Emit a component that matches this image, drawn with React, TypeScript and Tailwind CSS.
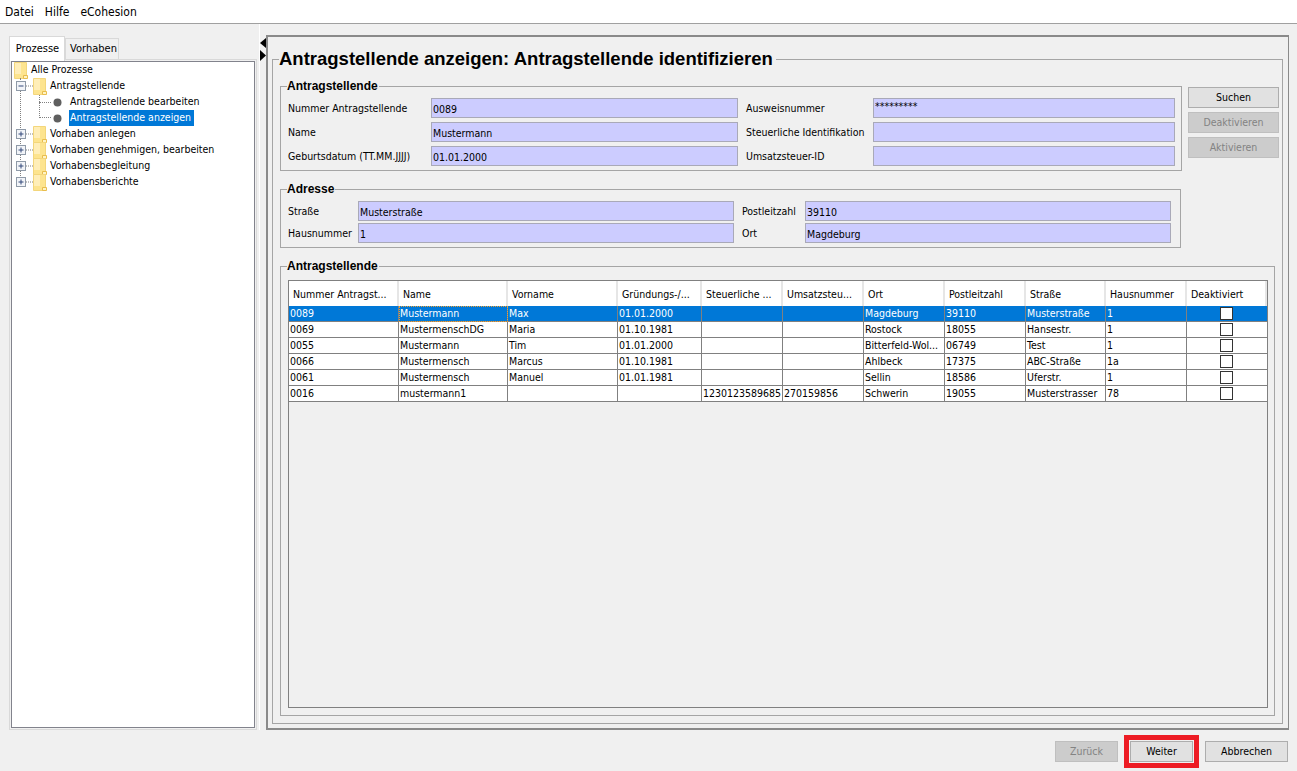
const columns = [
  { title: "Nummer Antragst...", width: "w-[110px]" },
  { title: "Name", width: "w-[109px]" },
  { title: "Vorname", width: "w-[110px]" },
  { title: "Gründungs-/...", width: "w-[84px]" },
  { title: "Steuerliche ...", width: "w-[81px]" },
  { title: "Umsatzsteu...", width: "w-[81px]" },
  { title: "Ort", width: "w-[81px]" },
  { title: "Postleitzahl", width: "w-[81px]" },
  { title: "Straße", width: "w-[80px]" },
  { title: "Hausnummer", width: "w-[81px]" },
  { title: "Deaktiviert", width: "w-[80px]" },
];

const rows = [
  ["0089", "Mustermann", "Max", "01.01.2000", "", "", "Magdeburg", "39110", "Musterstraße", "1"],
  ["0069", "MustermenschDG", "Maria", "01.10.1981", "", "", "Rostock", "18055", "Hansestr.", "1"],
  ["0055", "Mustermann", "Tim", "01.01.2000", "", "", "Bitterfeld-Wol...", "06749", "Test", "1"],
  ["0066", "Mustermensch", "Marcus", "01.10.1981", "", "", "Ahlbeck", "17375", "ABC-Straße", "1a"],
  ["0061", "Mustermensch", "Manuel", "01.01.1981", "", "", "Sellin", "18586", "Uferstr.", "1"],
  ["0016", "mustermann1", "", "", "1230123589685", "270159856", "Schwerin", "19055", "Musterstrasser", "78"],
];

const Folder = () => (
  <svg width="14" height="17" viewBox="0 0 14 17" className="shrink-0">
    <path d="M0.5 0.5H12.5V16.5H0.5Z" fill="#fde48f" stroke="#f3d67c" />
    <path d="M1 1H7V12H1Z" fill="#ffeeb8" />
    <path d="M9.5 16.5V13.5H13.5V16.5Z" fill="#fff3c4" stroke="#e9bd4c" />
  </svg>
);

const Expander = ({ open }: { open?: boolean }) => (
  <svg width="20" height="16" viewBox="0 0 20 16" className="absolute left-[4px] top-0">
    <path d="M10 8H17" stroke="#808080" strokeDasharray="1 1" />
    <rect x="0.5" y="3.5" width="9" height="9" fill="#f2f4f8" stroke="#8f9aa8" />
    <path d="M2.5 8H7.5" stroke="#33487a" />
    {!open && <path d="M5 5.5V10.5" stroke="#33487a" />}
  </svg>
);

const FolderRow = ({ label, open }: { label: string; open?: boolean }) => (
  <div className="relative flex h-4 items-center pl-[21px]">
    <Expander open={open} />
    <Folder />
    <span className="ml-[3px]">{label}</span>
  </div>
);

const LeafRow = ({ label, selected }: { label: string; selected?: boolean }) => (
  <div className="flex h-4 items-center pl-[41px]">
    <svg width="9" height="9" viewBox="0 0 9 9" className="shrink-0">
      <circle cx="4.5" cy="4.5" r="4" fill="#5f5f5f" />
    </svg>
    <span className={selected ? "ml-[7px] bg-[#0078d7] pl-px pr-[3px] text-white" : "ml-[8px]"}>{label}</span>
  </div>
);

const ProcessTree = () => (
  <div className="relative">
    <div className="absolute left-[8px] top-[16px] h-[104px] border-l border-dotted border-[#808080]" />
    <div className="absolute left-[27px] top-[32px] h-[24px] w-[12px] border-b border-l border-dotted border-[#808080]" />
    <div className="absolute left-[27px] top-[40px] w-[12px] border-b border-dotted border-[#808080]" />
    <div className="flex h-4 items-center pl-[2px]">
      <Folder />
      <span className="ml-[3px]">Alle Prozesse</span>
    </div>
    <FolderRow label="Antragstellende" open />
    <LeafRow label="Antragstellende bearbeiten" />
    <LeafRow label="Antragstellende anzeigen" selected />
    <FolderRow label="Vorhaben anlegen" />
    <FolderRow label="Vorhaben genehmigen, bearbeiten" />
    <FolderRow label="Vorhabensbegleitung" />
    <FolderRow label="Vorhabensberichte" />
  </div>
);

const Field = ({ value, small }: { value?: string; small?: boolean }) => (
  <div className={`h-5 border border-[#a9a9b8] bg-[#ccccff] pl-px ${small ? "leading-[15px]" : "leading-5"}`}>
    {value}
  </div>
);

const Label = ({ children }: { children: string }) => (
  <div className="whitespace-nowrap leading-[21px]">{children}</div>
);

const Group = ({ title, className, children }: { title: string; className: string; children: React.ReactNode }) => (
  <fieldset className={`border border-[#a5a5a5] ${className}`}>
    <legend className="-ml-px h-[14px] pr-px font-['Liberation_Sans',sans-serif] text-[12px] font-bold leading-[14px]">
      {title}
    </legend>
    {children}
  </fieldset>
);

const SideButton = ({ label, disabled }: { label: string; disabled?: boolean }) => (
  <button
    className={`h-[21px] w-[91px] border pt-px ${
      disabled ? "border-[#bfbfbf] bg-[#cccccc] text-[#838383]" : "border-[#adadad] bg-[#e1e1e1] text-black"
    }`}
  >
    {label}
  </button>
);

const ResultTable = () => (
  <div className="h-[428px] w-[980px] border border-[#808080] bg-[#f0f0f0]">
    <table className="w-[978px] table-fixed border-separate border-spacing-0">
      <thead>
        <tr>
          {columns.map((c) => (
            <th
              key={c.title}
              className={`h-[25px] border-r-2 border-[#e6e6e6] bg-white pt-[3px] pl-[4px] text-left font-normal whitespace-nowrap ${c.width}`}
            >
              {c.title}
            </th>
          ))}
        </tr>
      </thead>
      <tbody>
        {rows.map((row, i) => (
          <tr key={row[0]} className={i === 0 ? "bg-[#0078d7] text-white" : "bg-white text-black"}>
            {row.map((cell, j) => (
              <td
                key={j}
                className={`h-4 overflow-hidden border-r border-b border-[#808080] pl-px leading-[15px] whitespace-nowrap ${
                  i === 0 && j === 1 ? "outline-1 -outline-offset-1 outline-dotted outline-[#f0a030]" : ""
                }`}
              >
                {cell}
              </td>
            ))}
            <td className="h-4 border-b border-[#808080] pr-[2px]">
              <div className="mx-auto h-[13px] w-[13px] border border-[#333333] bg-white" />
            </td>
          </tr>
        ))}
      </tbody>
    </table>
  </div>
);

export default function App() {
  return (
    <div className="flex h-[771px] w-[1297px] flex-col overflow-hidden bg-[#f0f0f0] font-['DejaVu_Sans_Condensed','DejaVu_Sans',sans-serif] text-[10.5px] text-black">
      <div className="flex h-6 shrink-0 items-center gap-[11px] border-b border-[#a0a0a0] bg-white pl-[5px] text-[12px]">
        <span>Datei</span>
        <span>Hilfe</span>
        <span>eCohesion</span>
      </div>

      <div className="flex h-[706px] shrink-0">
        <div className="ml-[9px] flex w-[248px] shrink-0 flex-col pt-3">
          <div className="flex h-[23px] shrink-0 items-end text-[11px]">
            <div className="relative z-10 -mb-[2px] flex h-[25px] w-[56px] items-center justify-center border border-b-0 border-[#d9d9d9] bg-white pl-px">
              Prozesse
            </div>
            <div className="flex h-[21px] w-[54px] items-center justify-center border border-b-0 border-[#d9d9d9] pl-[3px]">
              Vorhaben
            </div>
          </div>
          <div className="flex-1 border border-[#d9d9d9] p-px">
            <div className="h-full border border-[#82838c] bg-white">
              <ProcessTree />
            </div>
          </div>
        </div>

        <div className="ml-[2px] w-[7px] shrink-0 border-l border-white pt-[14px]">
          <svg width="6" height="24" viewBox="0 0 6 24">
            <path d="M6 0V10L0 5Z" fill="#000" />
            <path d="M0 12V23L6 17.5Z" fill="#000" />
          </svg>
        </div>

        <div className="mt-[11px] h-[695px] w-[1023px] shrink-0 border-2 border-r border-[#8a8a8a] pt-[12px] pl-[4px]">
          <fieldset className="h-[675px] w-[1011px] border border-[#a5a5a5] pt-[10px] pl-[7px]">
            <legend className="-ml-px h-5 pr-[3px] font-['Liberation_Sans',sans-serif] text-[18.5px] font-bold leading-5">
              Antragstellende anzeigen: Antragstellende identifizieren
            </legend>

            <div className="flex items-start">
              <div className="flex flex-col gap-[11px]">
                <Group title="Antragstellende" className="w-[902px] pt-[5px] pb-[4px] pl-[7px]">
                  <div className="grid grid-cols-[143px_307px_135px_302px] grid-rows-[20px_20px_20px] gap-y-1">
                    <Label>Nummer Antragstellende</Label>
                    <Field value="0089" />
                    <div className="ml-2"><Label>Ausweisnummer</Label></div>
                    <Field value="*********" small />
                    <Label>Name</Label>
                    <Field value="Mustermann" />
                    <div className="ml-2"><Label>Steuerliche Identifikation</Label></div>
                    <Field />
                    <Label>Geburtsdatum (TT.MM.JJJJ)</Label>
                    <Field value="01.01.2000" />
                    <div className="ml-2"><Label>Umsatzsteuer-ID</Label></div>
                    <Field />
                  </div>
                </Group>

                <Group title="Adresse" className="w-[901px] pt-[5px] pb-[4px] pl-[7px]">
                  <div className="grid grid-cols-[70px_376px_71px_366px] grid-rows-[20px_20px] gap-y-[2px]">
                    <Label>Straße</Label>
                    <Field value="Musterstraße" />
                    <div className="ml-2"><Label>Postleitzahl</Label></div>
                    <Field value="39110" />
                    <Label>Hausnummer</Label>
                    <Field value="1" />
                    <div className="ml-2"><Label>Ort</Label></div>
                    <Field value="Magdeburg" />
                  </div>
                </Group>
              </div>

              <div className="mt-[8px] ml-[6px] flex flex-col gap-1">
                <SideButton label="Suchen" />
                <SideButton label="Deaktivieren" disabled />
                <SideButton label="Aktivieren" disabled />
              </div>
            </div>

            <Group title="Antragstellende" className="mt-[11px] h-[457px] w-[995px] pt-[7px] pl-[7px]">
              <ResultTable />
            </Group>
          </fieldset>
        </div>
      </div>

      <div className="flex items-start justify-end gap-[6px] pt-[5px] pr-[9px]">
        <button className="mt-[6px] h-[21px] w-[63px] border border-[#bfbfbf] bg-[#cccccc] pt-px text-[#838383]">Zurück</button>
        <div className="border-[5px] border-[#ed1c24] p-px">
          <button className="block h-[21px] w-[63px] border border-[#adadad] bg-[#e1e1e1] pt-px">Weiter</button>
        </div>
        <button className="mt-[6px] h-[21px] w-[83px] border border-[#adadad] bg-[#e1e1e1] pt-px">Abbrechen</button>
      </div>
    </div>
  );
}
